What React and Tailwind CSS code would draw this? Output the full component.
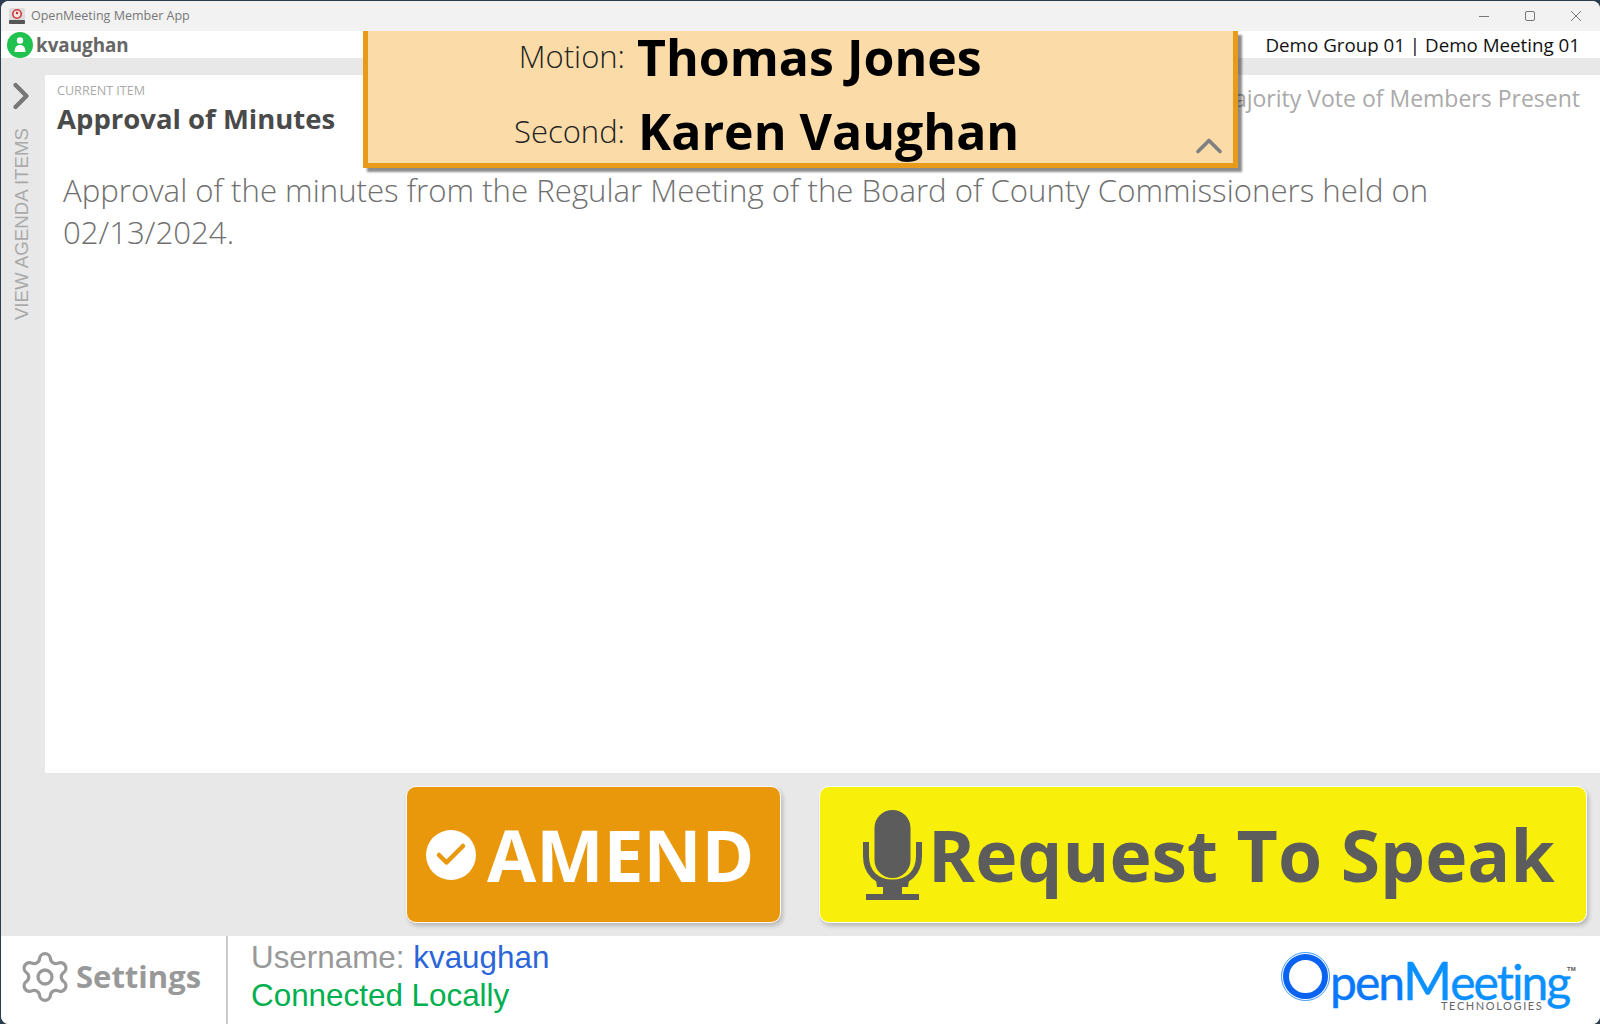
import React from 'react';
import { Settings, Check, ChevronUp, ChevronRight } from 'lucide-react';

const openSans = "font-['Open_Sans',sans-serif]";
const arial = "font-['Liberation_Sans',sans-serif]";

// little app icon in the title bar
const AppIcon = () => (
  <svg width="16" height="16" viewBox="0 0 16 16">
    <rect x="0" y="0" width="16" height="16" rx="2" fill="#dcdcdc" />
    <circle cx="8" cy="6" r="5" fill="#d0383a" />
    <circle cx="8" cy="6" r="3.4" fill="#f6e6e6" />
    <circle cx="8" cy="5" r="1.2" fill="#c03030" />
    <rect x="0" y="12" width="16" height="4" rx="1" fill="#555" />
  </svg>
);

const UserBadge = () => (
  <svg width="26" height="26" viewBox="0 0 26 26">
    <circle cx="13" cy="13" r="13" fill="#1fc24f" />
    <circle cx="13" cy="8.5" r="3.2" fill="#fff" />
    <path d="M7.5 20 C7.5 15.5 9.5 13 13 13 C16.5 13 18.5 15.5 18.5 20 Z" fill="#fff" />
  </svg>
);

const MicIcon = () => (
  <svg width="59" height="90" viewBox="0 0 59 90">
    <rect x="11.5" y="0" width="36" height="68" rx="18" fill="#5c5c5c" />
    <path d="M3 32 V46 C3 63 14 72.5 29.5 72.5 C45 72.5 56 63 56 46 V32" fill="none" stroke="#5c5c5c" strokeWidth="6" />
    <path d="M13 70 L14 77 H20 V84 H39 V77 H45 L46 70 Z" fill="#5c5c5c" />
    <rect x="3" y="84" width="53" height="6" fill="#5c5c5c" />
  </svg>
);

const Logo = () => (
  <div className="relative w-[293px] h-[60px]">
    <svg className="absolute left-0 top-[2px]" width="49" height="49" viewBox="0 0 49 49">
      <circle cx="24.5" cy="24.5" r="24" fill="none" stroke="#0a7cf5" strokeWidth="0.8" />
      <circle cx="24.5" cy="24.5" r="19.5" fill="none" stroke="#0a62f0" strokeWidth="6" />
    </svg>
    <div className="absolute left-[49px] top-0 whitespace-nowrap font-['Lato',sans-serif] text-[#0a90ff] tracking-[-2px] leading-[60px] text-[48px] [-webkit-text-stroke:0.4px_#0a90ff]">
      <span className="text-[#0a78fa] [-webkit-text-stroke:0.4px_#0a78fa]">pen</span><span className="text-[53px]">M</span>eeting
    </div>
    <div className="absolute left-[160px] top-[49px] text-[11px] leading-[14px] tracking-[1.6px] text-[#666] font-['Lato',sans-serif]">TECHNOLOGIES</div>
    <div className="absolute left-[286px] top-[15px] text-[6px] font-bold leading-[8px] text-[#555] font-['Liberation_Sans',sans-serif]">TM</div>
  </div>
);

export default function App() {
  return (
    <div className="w-[1600px] h-[1024px] bg-[#2c3e4d] overflow-hidden">
      <div className={`relative w-[1600px] h-[1024px] pl-px pt-px rounded-t-[8px] ${openSans}`}>
        <div className="w-full h-full flex flex-col bg-white rounded-[8px] overflow-hidden">
          {/* Title bar */}
          <div className="h-[30px] bg-[#f2f2f2] flex items-center shrink-0">
            <div className="ml-[8px] mr-[6px] flex"><AppIcon /></div>
            <span className="text-[12.5px] text-[#777]">OpenMeeting Member App</span>
            <div className="ml-auto flex items-center gap-[34px] mr-[18px]">
              <svg width="12" height="12" viewBox="0 0 12 12"><path d="M1 6.5 H11" stroke="#777" strokeWidth="1" /></svg>
              <svg width="12" height="12" viewBox="0 0 12 12"><rect x="1.5" y="1.5" width="9" height="9" rx="1.5" fill="none" stroke="#777" strokeWidth="1" /></svg>
              <svg width="12" height="12" viewBox="0 0 12 12"><path d="M1 1 L11 11 M11 1 L1 11" stroke="#777" strokeWidth="1" /></svg>
            </div>
          </div>

          {/* User bar */}
          <div className="h-[27px] pt-[1px] bg-white flex items-center shrink-0">
            <div className="ml-[6px] mr-[3px] flex"><UserBadge /></div>
            <span className="text-[18.8px] font-bold text-[#666]">kvaughan</span>
            <span className="ml-auto mr-[20px] text-[18.75px] text-[#111]">Demo Group 01 | Demo Meeting 01</span>
          </div>

          <div className="h-[17px] bg-[#e8e8e8] shrink-0" />

          {/* Middle */}
          <div className="flex-1 flex min-h-0">
            <div className="w-[44px] bg-[#e8e8e8] flex flex-col items-center shrink-0">
              <ChevronRight size={44} strokeWidth={2.4} className="text-[#777] mt-[-1px] -ml-[4px]" />
              <span className={`${arial} mt-[10px] -ml-[1px] text-[18.7px] text-[#aaa] [writing-mode:vertical-rl] rotate-180 whitespace-nowrap`}>VIEW AGENDA ITEMS</span>
            </div>
            <div className="flex-1 bg-white pl-[12px] pr-[20px] pt-[7px]">
              <div className="flex justify-between">
                <div>
                  <div className="text-[12.6px] leading-[18px] text-[#aaa]">CURRENT ITEM</div>
                  <div className="mt-[1px] text-[27.5px] font-bold leading-[36px] text-[#4a4a4a]">Approval of Minutes</div>
                </div>
                <div className="text-[23px] text-[#aaa] -mt-[1px]">Majority Vote of Members Present</div>
              </div>
              <p className="mt-[32px] ml-[6px] text-[31.2px] leading-[42px] font-light text-[#707070] pr-[130px]">
                Approval of the minutes from the Regular Meeting of the Board of County Commissioners held on 02/13/2024.
              </p>
            </div>
          </div>

          {/* Action buttons */}
          <div className="h-[163px] bg-[#e8e8e8] flex justify-end items-center gap-[38px] pr-[13px] shrink-0">
            <div className="w-[375px] h-[137px] bg-[#e8980a] border border-white rounded-[10px] shadow-[2px_3px_4px_rgba(0,0,0,0.2)] flex items-center pl-[19px] gap-[11px]">
              <span className="w-[50px] h-[50px] rounded-full bg-white flex items-center justify-center">
                <Check size={36} strokeWidth={3} className="text-[#e8980a]" />
              </span>
              <span className="mt-[1px] text-[71.4px] font-bold text-white leading-none">AMEND</span>
            </div>
            <div className="w-[768px] h-[137px] bg-[#f8f00a] border border-white rounded-[10px] shadow-[2px_3px_4px_rgba(0,0,0,0.2)] flex items-center pl-[43px] gap-[6px]">
              <MicIcon />
              <span className="mt-[1px] text-[71.4px] font-bold text-[#5c5c5c] leading-none whitespace-nowrap">Request To Speak</span>
            </div>
          </div>

          {/* Footer */}
          <div className="h-[88px] bg-white flex items-center shrink-0">
            <div className="w-[227px] h-full flex items-center border-r-2 border-[#ccc] pl-[16px] gap-[3px] pb-[7px]">
              <Settings size={56} strokeWidth={1.4} className="text-[#999]" />
              <span className="text-[31px] font-bold text-[#999]">Settings</span>
            </div>
            <div className={`${arial} ml-[23px] text-[31.4px] leading-[38px] pb-[7px]`}>
              <div className="text-[#999]">Username: <span className="text-[#2b65d9]">kvaughan</span></div>
              <div className="text-[#00b050]">Connected Locally</div>
            </div>
            <div className="ml-auto mr-[26px]"><Logo /></div>
          </div>
        </div>

        {/* Motion / second popup over the top of the page */}
        <div className="absolute left-[363px] top-[31px] w-[875px] h-[137px] bg-[#fbdca9] border-x-[5px] border-b-[5px] border-[#e89b1a] shadow-[4px_4px_2px_rgba(0,0,0,0.45)] pt-[1px]">
          <div className="flex items-center h-[50px]">
            <span className="w-[257px] pb-[2px] text-right text-[31px] font-light text-[#222]">Motion:</span>
            <span className="ml-[12px] text-[50px] font-bold text-black leading-none">Thomas Jones</span>
          </div>
          <div className="flex items-center h-[50px] mt-[25px]">
            <span className="w-[257px] pb-[1px] text-right text-[31px] font-light text-[#222]">Second:</span>
            <span className="ml-[13px] -mt-[2px] text-[50px] font-bold text-black leading-none">Karen Vaughan</span>
          </div>
          <ChevronUp size={44} strokeWidth={2} className="absolute right-[2px] bottom-[-5px] text-[#808080]" />
        </div>
      </div>
    </div>
  );
}
